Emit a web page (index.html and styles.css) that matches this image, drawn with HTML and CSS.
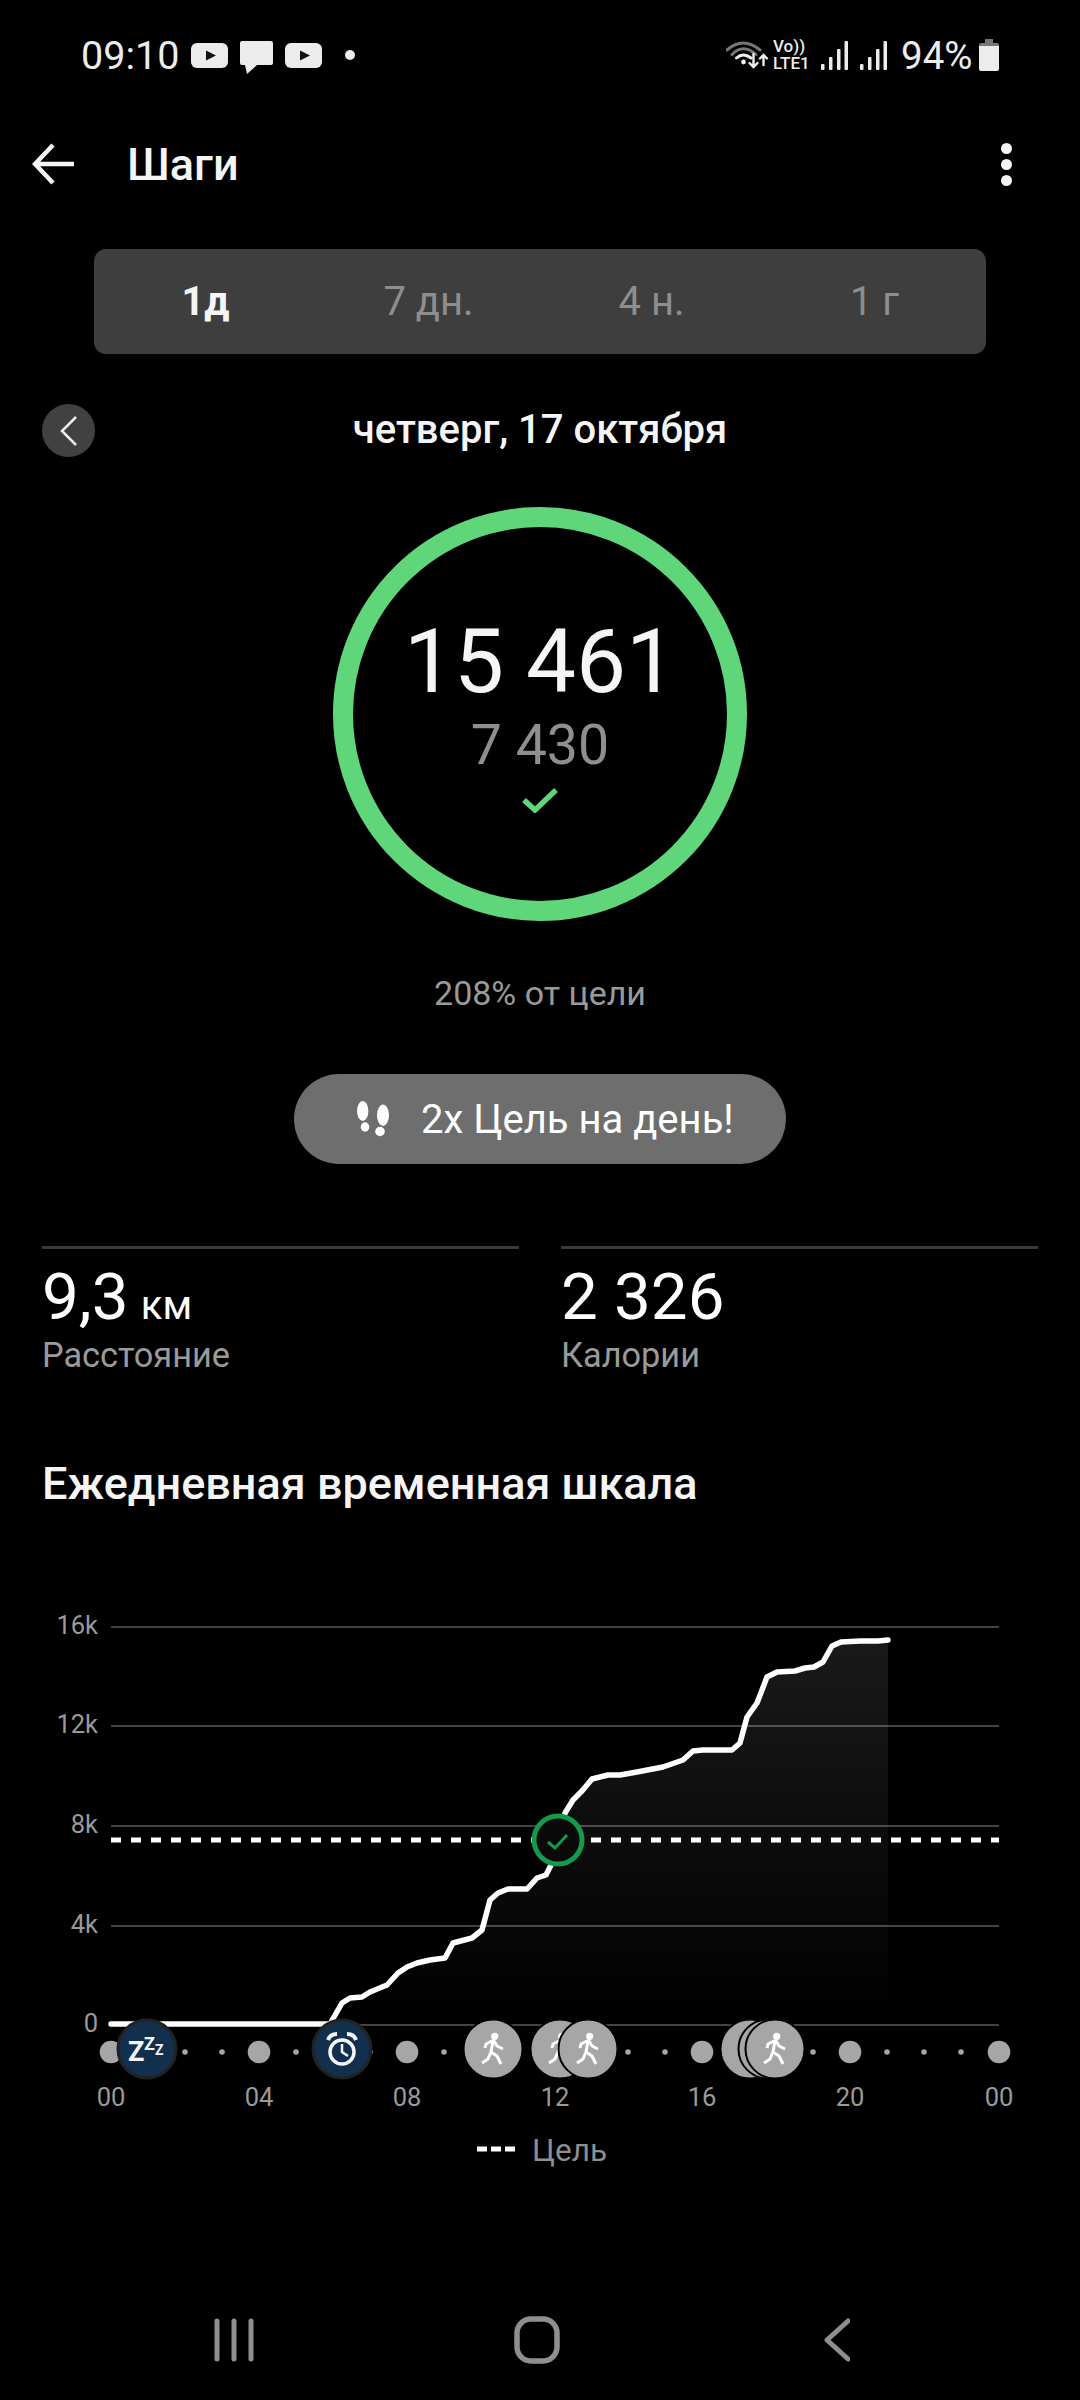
FILE: index.html
```html
<!DOCTYPE html>
<html lang="ru">
<head>
    <meta charset="UTF-8">
    <meta name="viewport" content="width=device-width, initial-scale=1.0">
    <title>Шаги</title>
    <link rel="stylesheet" href="styles.css">
</head>
<body>
    <div class="page">
        <div class="status-bar">
            <div class="status-left">
                <span class="clock">09:10</span>
                <svg class="icon-yt" viewBox="0 0 37 25"><rect width="37" height="25" rx="6" fill="#ececec"/><path d="M15 7.500 25 12.500 15 17.500z" fill="#111"/></svg>
                <svg class="icon-chat" viewBox="0 0 33 33"><path d="M0 2q0-2 2-2h29q2 0 2 2v20q0 2-2 2H17L7 33 5 24H2q-2 0-2-2z" fill="#ececec"/></svg>
                <svg class="icon-yt" viewBox="0 0 37 25"><rect width="37" height="25" rx="6" fill="#ececec"/><path d="M15 7.500 25 12.500 15 17.500z" fill="#111"/></svg>
                <span class="status-dot"></span>
            </div>
            <div class="status-right">
                <svg class="icon-wifi" viewBox="0 0 43 33" fill="none" stroke-linecap="round">
                    <path d="M1 13Q17-1 34 13" stroke="#777" stroke-width="3"/>
                    <path d="M6 17.500Q17 6 30 17.500" stroke="#777" stroke-width="3"/>
                    <path d="M10.500 21Q17 15 25 21" stroke="#eee" stroke-width="3"/>
                    <circle cx="17.500" cy="25" r="2.400" fill="#eee"/>
                    <path d="M27.500 17v13M23.500 26l4 4 4-4" stroke="#eee" stroke-width="2.400"/>
                    <path d="M37.500 28V18M34 21.500l3.500-3.500 3.500 3.500" stroke="#eee" stroke-width="2.400"/>
                </svg>
                <div class="volte">
                    <span>Vo))</span>
                    <span>LTE1</span>
                </div>
                <svg class="icon-signal" viewBox="0 0 27 29"><g fill="#ececec"><rect y="23" width="3.500" height="6" rx="1"/><rect x="8" y="16" width="3.500" height="13" rx="1"/><rect x="16" y="8" width="3.500" height="21" rx="1"/><rect x="23.500" width="3.500" height="29" rx="1"/></g></svg>
                <svg class="icon-signal" viewBox="0 0 27 29"><g fill="#ececec"><rect y="23" width="3.500" height="6" rx="1"/><rect x="8" y="16" width="3.500" height="13" rx="1"/><rect x="16" y="8" width="3.500" height="21" rx="1"/><rect x="23.500" width="3.500" height="29" rx="1"/></g></svg>
                <span class="battery-text">94%</span>
                <svg class="icon-battery" viewBox="0 0 20 32"><path d="M6 0h8v4h4q2 0 2 2v2H0V6q0-2 2-2h4z" fill="#777"/><path d="M0 7h20v23q0 2-2 2H2q-2 0-2-2z" fill="#ececec"/></svg>
            </div>
        </div>

        <div class="app-bar">
            <svg class="icon-back" viewBox="0 0 42 42" fill="none" stroke="#f5f5f5" stroke-width="4.500"><path d="M42 21H4M21 2 3 21l18 19"/></svg>
            <h1 class="app-title">Шаги</h1>
            <div class="more-menu"><span></span><span></span><span></span></div>
        </div>

        <div class="tabs">
            <div class="tab active">1д</div>
            <div class="tab">7 дн.</div>
            <div class="tab">4 н.</div>
            <div class="tab">1 г</div>
        </div>

        <div class="date-row">
            <div class="date-prev">
                <svg viewBox="0 0 20 30" fill="none" stroke="#f0f0f0" stroke-width="2.500"><path d="M17 1 3 15l14 14"/></svg>
            </div>
            <div class="date-label">четверг, 17 октября</div>
        </div>

        <div class="ring">
            <div class="ring-value">15 461</div>
            <div class="ring-goal">7 430</div>
            <svg class="ring-check" viewBox="0 0 36 26" fill="none" stroke="#5fd67a" stroke-width="5.500"><path d="M2 13l11 10L34 3"/></svg>
        </div>
        <div class="goal-percent">208% от цели</div>

        <div class="badge">
            <svg class="icon-steps" viewBox="0 0 32 36" fill="#fff">
                <ellipse cx="5.700" cy="10" rx="5.700" ry="10"/>
                <ellipse cx="8" cy="26" rx="4.300" ry="4.700"/>
                <ellipse cx="26" cy="14.300" rx="6" ry="10.700"/>
                <ellipse cx="23" cy="30.500" rx="4.800" ry="4.700"/>
            </svg>
            <span>2x Цель на день!</span>
        </div>

        <div class="stats">
            <div class="stat">
                <div class="stat-value">9,3 <small>км</small></div>
                <div class="stat-label">Расстояние</div>
            </div>
            <div class="stat">
                <div class="stat-value">2 326</div>
                <div class="stat-label">Калории</div>
            </div>
        </div>

        <h2 class="section-title">Ежедневная временная шкала</h2>

        <svg class="chart" viewBox="0 1600 1080 570">
            <defs>
                <linearGradient id="areaFade" x1="0" y1="0" x2="0" y2="1">
                    <stop offset="0" stop-color="#fff" stop-opacity="0.1"/>
                    <stop offset="1" stop-color="#fff" stop-opacity="0"/>
                </linearGradient>
                <g id="walker">
                    <circle cx="1.700" cy="-12.700" r="3.600" fill="#fff"/>
                    <path d="M-8-1-7-5-1-8 1-8 4-3 10 0M0-8-2 3-5 10-11 14M-2 3 4 7 8 15" fill="none" stroke="#fff" stroke-width="3" stroke-linejoin="round"/>
                </g>
            </defs>

            <g class="grid-lines">
                <line x1="111" x2="999" y1="1627" y2="1627"/>
                <line x1="111" x2="999" y1="1726" y2="1726"/>
                <line x1="111" x2="999" y1="1826" y2="1826"/>
                <line x1="111" x2="999" y1="1926" y2="1926"/>
                <line x1="111" x2="999" y1="2025" y2="2025"/>
            </g>

            <g class="axis-text y-axis">
                <text x="98" y="1634">16k</text>
                <text x="98" y="1733">12k</text>
                <text x="98" y="1833">8k</text>
                <text x="98" y="1933">4k</text>
                <text x="98" y="2032">0</text>
            </g>

            <path class="area" fill="url(#areaFade)" d="M330 2023 342 2003 350 1998 362 1997 370 1992 387 1985 398 1973 407 1967 417 1963 430 1960 445 1958 453 1943 472 1938 482 1930 490 1900 498 1893 508 1889 527 1889 537 1878 546 1875 552 1863 565 1813 573 1800 582 1791 592 1779 608 1775 620 1775 637 1772 663 1767 683 1760 693 1751 703 1750 732 1750 740 1743 747 1717 757 1703 767 1677 777 1672 795 1671 805 1668 814 1667 823 1662 832 1646 841 1642 860 1641 878 1641 888 1640V2025H330z"/>

            <line class="goal-line" x1="111" x2="999" y1="1840" y2="1840"/>

            <path class="curve" d="M111 2024H330L342 2003 350 1998 362 1997 370 1992 387 1985 398 1973 407 1967 417 1963 430 1960 445 1958 453 1943 472 1938 482 1930 490 1900 498 1893 508 1889 527 1889 537 1878 546 1875 552 1863 565 1813 573 1800 582 1791 592 1779 608 1775 620 1775 637 1772 663 1767 683 1760 693 1751 703 1750 732 1750 740 1743 747 1717 757 1703 767 1677 777 1672 795 1671 805 1668 814 1667 823 1662 832 1646 841 1642 860 1641 878 1641 888 1640"/>

            <circle class="goal-mark" cx="558" cy="1840" r="24"/>
            <path class="goal-tick" d="M548 1842l7 6 12-13"/>

            <g class="hour-dots">
                <circle cx="111" cy="2052" r="11.300"/>
                <circle cx="185" cy="2052" r="2.800"/>
                <circle cx="222" cy="2052" r="2.800"/>
                <circle cx="259" cy="2052" r="11.300"/>
                <circle cx="296" cy="2052" r="2.800"/>
                <circle cx="370" cy="2052" r="2.800"/>
                <circle cx="407" cy="2052" r="11.300"/>
                <circle cx="444" cy="2052" r="2.800"/>
                <circle cx="628" cy="2052" r="2.800"/>
                <circle cx="665" cy="2052" r="2.800"/>
                <circle cx="702" cy="2052" r="11.300"/>
                <circle cx="813" cy="2052" r="2.800"/>
                <circle cx="850" cy="2052" r="11.300"/>
                <circle cx="887" cy="2052" r="2.800"/>
                <circle cx="924" cy="2052" r="2.800"/>
                <circle cx="961" cy="2052" r="2.800"/>
                <circle cx="999" cy="2052" r="11.300"/>
            </g>

            <g class="mark-blue">
                <circle cx="147" cy="2049" r="29"/>
                <circle cx="342" cy="2049" r="29"/>
            </g>
            <g class="sleep-text">
                <text x="128" y="2061" font-size="27">Z</text>
                <text x="144" y="2050" font-size="18">Z</text>
                <text x="155" y="2055" font-size="14">Z</text>
            </g>
            <g fill="none" stroke="#f5f5f5" stroke-width="3.500">
                <circle cx="342" cy="2052" r="12"/>
                <path d="M342 2044v8l6 4" stroke-width="2.500"/>
                <path d="M328 2040q2-6 9-6M356 2040q-2-6-9-6" stroke-width="4"/>
            </g>

            <g class="mark-walk">
                <circle cx="493" cy="2049" r="29.500"/>
                <use href="#walker" x="493" y="2049"/>
                <circle cx="560" cy="2049" r="29.500"/>
                <use href="#walker" x="560" y="2049"/>
                <circle cx="588" cy="2049" r="29.500"/>
                <use href="#walker" x="588" y="2049"/>
                <circle cx="750" cy="2049" r="29.500"/>
                <circle cx="768" cy="2049" r="29.500"/>
                <circle cx="775" cy="2049" r="29.500"/>
                <use href="#walker" x="775" y="2049"/>
            </g>

            <g class="axis-text x-axis">
                <text x="111" y="2106">00</text>
                <text x="259" y="2106">04</text>
                <text x="407" y="2106">08</text>
                <text x="555" y="2106">12</text>
                <text x="702" y="2106">16</text>
                <text x="850" y="2106">20</text>
                <text x="999" y="2106">00</text>
            </g>

            <path class="legend-dash" d="M477 2149h38"/>
            <text class="legend-text" x="532" y="2161">Цель</text>
        </svg>

        <div class="nav-bar">
            <svg class="nav-recent" viewBox="0 0 40 44" fill="none" stroke="#8f8f8f" stroke-width="5" stroke-linecap="round"><path d="M3 3v38M20 3v38M37 3v38"/></svg>
            <svg class="nav-home" viewBox="0 0 46 48" fill="none" stroke="#8f8f8f" stroke-width="5.500"><rect x="3" y="3" width="40" height="42" rx="14"/></svg>
            <svg class="nav-back" viewBox="0 0 30 44" fill="none" stroke="#8f8f8f" stroke-width="5" stroke-linecap="round" stroke-linejoin="round"><path d="M28 3 7 22l21 19"/></svg>
        </div>
    </div>
</body>
</html>
```

FILE: styles.css
```css
* {
    box-sizing: border-box;
}
body {
    margin: 0;
    background-color: #000;
    color: #f5f5f5;
    font-family: Roboto, "Noto Sans", sans-serif;
}
.page {
    display: flex;
    flex-direction: column;
    width: 1080px;
    height: 2400px;
    overflow: hidden;
}

/* status bar */
.status-bar {
    display: flex;
    justify-content: space-between;
    align-items: center;
    height: 110px;
    padding: 0 81px;
    color: #ececec;
}
.status-left,
.status-right {
    display: flex;
    align-items: center;
}
.clock {
    width: 110px;
    font-size: 39.500px;
}
.icon-yt {
    width: 37px;
    height: 25px;
}
.icon-chat {
    width: 33px;
    height: 33px;
    margin: 5px 12px 0;
}
.status-dot {
    width: 10px;
    height: 10px;
    margin-left: 23px;
    border-radius: 50%;
    background-color: #ececec;
}
.icon-wifi {
    width: 43px;
    height: 33px;
    margin-bottom: 3px;
}
.volte {
    display: flex;
    flex-direction: column;
    width: 38px;
    margin: 0 10px 0 4px;
    font-size: 17px;
    line-height: 17px;
    font-weight: 500;
    white-space: nowrap;
}
.icon-signal {
    width: 27px;
    height: 29px;
    margin-right: 12px;
}
.battery-text {
    width: 78px;
    margin-left: 2px;
    font-size: 38.500px;
}
.icon-battery {
    width: 20px;
    height: 32px;
}

/* app bar */
.app-bar {
    display: flex;
    align-items: center;
    height: 108px;
    padding: 0 68px 0 32px;
}
.icon-back {
    width: 42px;
    height: 42px;
}
.app-title {
    flex: 1;
    margin: 0 0 0 53px;
    font-size: 45px;
    font-weight: 500;
}
.more-menu {
    display: flex;
    flex-direction: column;
    gap: 5px;
}
.more-menu span {
    width: 11px;
    height: 11px;
    border-radius: 50%;
    background-color: #f5f5f5;
}

/* period tabs */
.tabs {
    display: flex;
    height: 105px;
    margin: 31px 94px 0;
    border-radius: 12px;
    background-color: #3e3e3e;
}
.tab {
    flex: 1;
    display: flex;
    justify-content: center;
    align-items: center;
    font-size: 40px;
    color: #8e8e8e;
}
.tab.active {
    font-weight: 700;
    color: #f5f5f5;
}

/* date row */
.date-row {
    display: grid;
    grid-template-columns: 53px 1fr 53px;
    align-items: center;
    height: 53px;
    margin-top: 50px;
    padding: 0 42px;
}
.date-prev {
    display: flex;
    justify-content: center;
    align-items: center;
    width: 53px;
    height: 53px;
    border-radius: 50%;
    background-color: #414141;
}
.date-prev svg {
    width: 20px;
    height: 30px;
}
.date-label {
    margin-bottom: 2px;
    font-size: 40px;
    font-weight: 500;
    text-align: center;
}

/* ring */
.ring {
    display: flex;
    flex-direction: column;
    align-items: center;
    align-self: center;
    width: 414px;
    height: 414px;
    margin-top: 50px;
    padding-top: 89px;
    border: 20px solid #5fd67a;
    border-radius: 50%;
}
.ring-value {
    font-size: 89px;
    line-height: 92px;
    white-space: nowrap;
}
.ring-goal {
    margin-top: 9px;
    font-size: 55.500px;
    line-height: 58px;
    color: #8f8f8f;
}
.ring-check {
    width: 36px;
    height: 26px;
    margin-top: 12px;
}
.goal-percent {
    margin-top: 52px;
    font-size: 34px;
    line-height: 40px;
    text-align: center;
    color: #9a9a9a;
}

/* badge */
.badge {
    display: flex;
    align-items: center;
    gap: 32px;
    align-self: center;
    width: 492px;
    height: 90px;
    margin-top: 61px;
    padding-left: 63px;
    border-radius: 45px;
    background-color: #6e6e6e;
    font-size: 40px;
    color: #fff;
}
.icon-steps {
    width: 32px;
    height: 36px;
}

/* stats */
.stats {
    display: grid;
    grid-template-columns: 477px 477px;
    column-gap: 42px;
    margin-top: 82px;
    padding: 0 42px;
}
.stat {
    padding-top: 16px;
    border-top: 3px solid #3a3a3a;
}
.stat-value {
    height: 64px;
    font-size: 65.500px;
    line-height: 64px;
    color: #fff;
}
.stat-value small {
    margin-left: -4px;
    font-size: 40px;
    line-height: 0;
}
.stat-label {
    margin-top: 6px;
    font-size: 34.300px;
    line-height: 40px;
    color: #9a9a9a;
}
.section-title {
    margin: 84px 0 0;
    padding-left: 42px;
    font-size: 45px;
    line-height: 50px;
    font-weight: 500;
}

/* chart */
.chart {
    display: block;
    flex: none;
    width: 1080px;
    height: 570px;
    margin-top: 91px;
}
.grid-lines line {
    stroke: #444;
    stroke-width: 2;
}
.axis-text text {
    font-size: 25.500px;
    fill: #9a9a9a;
}
.y-axis text {
    text-anchor: end;
}
.x-axis text {
    text-anchor: middle;
}
.goal-line {
    stroke: #fff;
    stroke-width: 5;
    stroke-dasharray: 10 10;
}
.curve {
    fill: none;
    stroke: #fff;
    stroke-width: 5.500;
    stroke-linejoin: round;
    stroke-linecap: round;
}
.goal-mark {
    fill: #0a0a0a;
    stroke: #149a4a;
    stroke-width: 5;
}
.goal-tick {
    fill: none;
    stroke: #149a4a;
    stroke-width: 3;
}
.hour-dots circle {
    fill: #a6a6a6;
}
.mark-blue circle {
    fill: #12304d;
    stroke: #222;
    stroke-width: 3;
}
.sleep-text text {
    font-weight: 700;
    fill: #f5f5f5;
}
.mark-walk > circle {
    fill: #a6a6a6;
    stroke: #000;
    stroke-width: 2;
}
.legend-dash {
    fill: none;
    stroke: #fff;
    stroke-width: 5;
    stroke-dasharray: 10 4;
}
.legend-text {
    font-size: 31.500px;
    fill: #8f8f8f;
}

/* navigation */
.nav-bar {
    display: flex;
    justify-content: space-between;
    align-items: center;
    height: 120px;
    margin-top: auto;
    padding: 0 230px 0 214px;
}
.nav-recent {
    width: 40px;
    height: 44px;
}
.nav-home {
    width: 46px;
    height: 48px;
}
.nav-back {
    width: 30px;
    height: 44px;
}
```
